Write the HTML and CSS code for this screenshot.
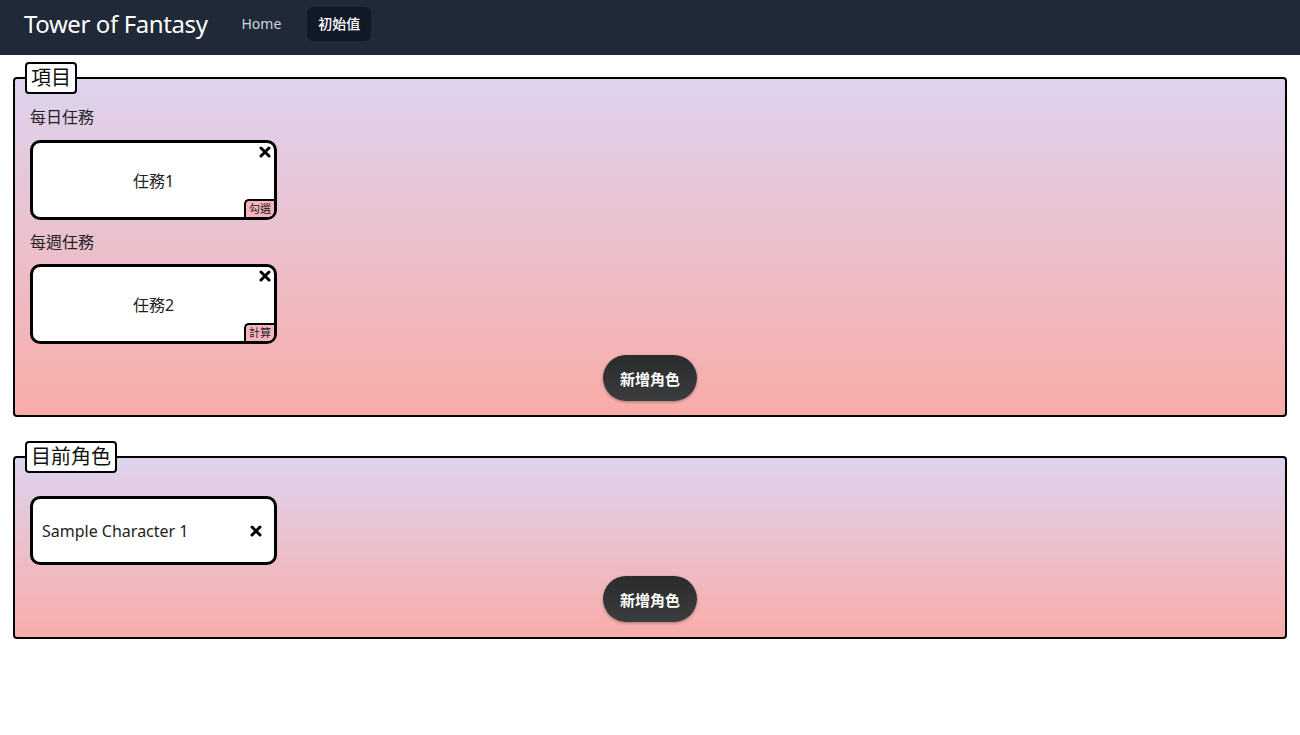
FILE: index.html
```html
<!DOCTYPE html>
<html lang="zh-Hant">
<head>
<meta charset="utf-8">
<title>Tower of Fantasy</title>
<link rel="stylesheet" href="styles.css">
</head>
<body>
<nav class="navbar">
  <span class="brand">Tower of Fantasy</span>
  <a class="nav-link">Home</a>
  <a class="nav-link active">初始值</a>
</nav>
<main class="main">
  <fieldset class="panel panel-tasks">
    <legend class="panel-legend">項目</legend>
    <div class="section-label">每日任務</div>
    <div class="task-card">
      <span class="task-name">任務1</span>
      <svg class="close-icon" viewBox="0 0 12 12" width="12" height="12"><path d="M2 2L10 10M10 2L2 10" stroke="#000" stroke-width="3" stroke-linecap="round"/></svg>
      <span class="task-tag">勾選</span>
    </div>
    <div class="section-label second">每週任務</div>
    <div class="task-card">
      <span class="task-name">任務2</span>
      <svg class="close-icon" viewBox="0 0 12 12" width="12" height="12"><path d="M2 2L10 10M10 2L2 10" stroke="#000" stroke-width="3" stroke-linecap="round"/></svg>
      <span class="task-tag">計算</span>
    </div>
    <div class="actions"><button class="add-btn">新增角色</button></div>
  </fieldset>

  <fieldset class="panel panel-chars">
    <legend class="panel-legend">目前角色</legend>
    <div class="char-card">
      <span class="char-name">Sample Character 1</span>
      <svg class="char-close" viewBox="0 0 12 12" width="12" height="12"><path d="M2 2L10 10M10 2L2 10" stroke="#000" stroke-width="3" stroke-linecap="round"/></svg>
    </div>
    <div class="actions"><button class="add-btn">新增角色</button></div>
  </fieldset>
</main>
</body>
</html>
```
FILE: styles.css
```css
* { box-sizing: border-box; }
html, body {
  margin: 0;
  padding: 0;
  background: #fff;
  font-family: "Noto Sans", "Noto Sans CJK TC", sans-serif;
  color: #212529;
}
.navbar {
  height: 55px;
  background: #1f2937;
  display: flex;
  align-items: flex-start;
  padding: 7px 24px 0;
}
.brand {
  color: #fff;
  font-size: 24px;
  letter-spacing: -0.4px;
  margin-right: 22px;
  line-height: 34px;
}
.nav-link {
  color: #d1d5db;
  font-size: 14px;
  padding: 0 12px;
  height: 34px;
  line-height: 34px;
  border-radius: 6px;
  margin-right: 14px;
}
.nav-link.active {
  background: #111827;
  color: #fff;
  font-size: 14px;
  padding: 0 11px;
  font-weight: 500;
}
.main {
  padding: 7px 13px 0;
}
.panel {
  margin: 0;
  border: 2px solid #000;
  border-radius: 4px;
  padding: 11px 15px 14px;
  background: linear-gradient(to bottom, #ded3ef, #f9aca8);
  min-width: 0;
}
.panel-chars {
  margin-top: 24px;
  padding-top: 23px;
  padding-bottom: 15px;
}
.panel-legend {
  margin-left: -5px;
  padding: 0 4px;
  background: #fff;
  border: 2px solid #000;
  border-radius: 4px;
  font-size: 20px;
  line-height: 28px;
  color: #111;
}
.section-label {
  font-size: 16px;
  line-height: 24px;
  margin-bottom: 11px;
  color: #222;
}
.section-label.second {
  margin-top: 10px;
  margin-bottom: 10px;
}
.task-card {
  position: relative;
  width: 247px;
  height: 80px;
  background: #fff;
  border: 3px solid #000;
  border-radius: 10px;
  display: flex;
  align-items: center;
  justify-content: center;
}
.task-name {
  font-size: 16px;
  color: #222;
}
.close-icon {
  position: absolute;
  top: 3px;
  right: 3px;
}
.task-tag {
  position: absolute;
  right: 0;
  bottom: 0;
  background: #f8b4bc;
  border-top: 2px solid #000;
  border-left: 2px solid #000;
  border-top-left-radius: 5px;
  border-bottom-right-radius: 6px;
  font-size: 11px;
  line-height: 16px;
  padding: 0 3px 0 3px;
  color: #222;
}
.actions {
  display: flex;
  justify-content: center;
  margin-top: 11px;
}
.add-btn {
  width: 94px;
  height: 46px;
  border: none;
  border-radius: 23px;
  background: linear-gradient(to bottom, #2a2b2d, #3b3c3e);
  box-shadow: 0 1px 3px rgba(0,0,0,0.35);
  color: #fff;
  font-family: "Noto Sans", "Noto Sans CJK TC", sans-serif;
  font-size: 15px;
  font-weight: 700;
  padding: 0;
}
.char-card {
  width: 247px;
  height: 69px;
  background: #fff;
  border: 3px solid #000;
  border-radius: 10px;
  display: flex;
  align-items: center;
  justify-content: space-between;
  padding: 0 12px 0 9px;
}
.char-name {
  font-size: 16px;
  color: #222;
}
```
